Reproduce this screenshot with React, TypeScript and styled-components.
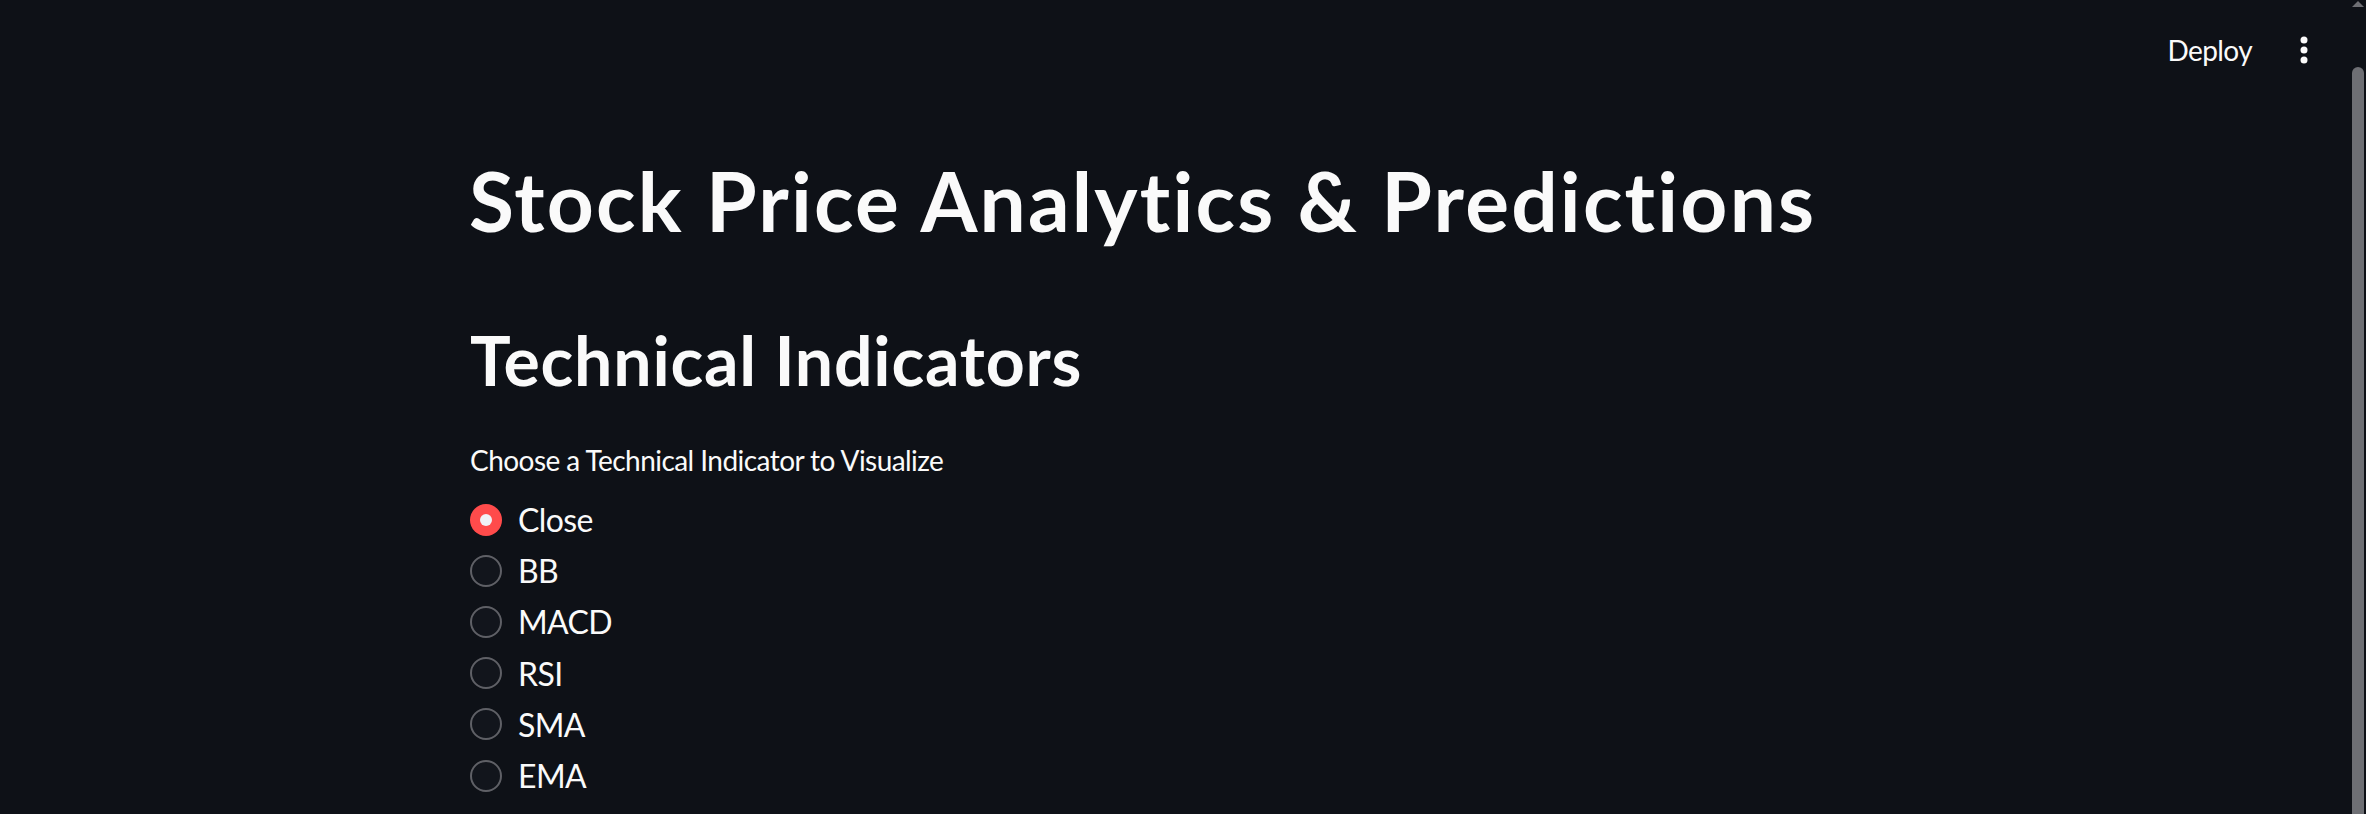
import React from 'react';
import { styled, createGlobalStyle } from 'styled-components';

const GlobalStyle = createGlobalStyle`
  html, body {
    margin: 0;
    padding: 0;
    background: #0e1117;
    overflow: hidden;
  }
  body {
    font-family: Lato, 'Noto Sans', sans-serif;
    font-variant-ligatures: none;
    color: #fafafa;
  }
`;

const Page = styled.div`
  min-height: 814px;
  background: #0e1117;
`;

const Header = styled.header`
  display: flex;
  justify-content: flex-end;
  align-items: flex-start;
  gap: 32px;
  height: 100px;
  padding: 30px 42px 0 0;
  box-sizing: border-box;
`;

const DeployButton = styled.button`
  all: unset;
  font-family: Lato, sans-serif;
  font-size: 28px;
  line-height: 40px;
  letter-spacing: -0.6px;
  color: #fafafa;
  cursor: pointer;
`;

const MenuButton = styled.button`
  all: unset;
  display: flex;
  align-items: center;
  justify-content: center;
  width: 40px;
  height: 40px;
  cursor: pointer;
`;

const Main = styled.main`
  width: 1426px;
  margin: 0 auto;
  padding-top: 50px;
`;

const Title = styled.h1`
  margin: 0 0 0 -1px;
  font-size: 82px;
  line-height: 100px;
  font-weight: 700;
  letter-spacing: 2.2px;
`;

const SubTitle = styled.h2`
  margin: 70px 0 0;
  font-size: 68px;
  line-height: 80px;
  font-weight: 700;
  letter-spacing: 0.8px;
`;

const Label = styled.p`
  margin: 40px 0 0;
  font-size: 28px;
  line-height: 40px;
  letter-spacing: -0.55px;
`;

const RadioGroup = styled.div`
  display: flex;
  flex-direction: column;
  margin-top: 14px;
`;

const RadioRow = styled.label`
  display: flex;
  align-items: center;
  gap: 16px;
  height: 51.2px;
  font-size: 32px;
  letter-spacing: -0.6px;
  cursor: pointer;
`;

const RadioMark = styled.span<{ $checked: boolean }>`
  display: flex;
  align-items: center;
  justify-content: center;
  flex-shrink: 0;
  width: 32px;
  height: 32px;
  box-sizing: border-box;
  border-radius: 50%;
  border: ${(p) => (p.$checked ? 'none' : '2px solid #5f6066')};
  background: ${(p) => (p.$checked ? '#ff4b4b' : '#12151c')};

  &::after {
    content: '';
    display: ${(p) => (p.$checked ? 'block' : 'none')};
    width: 12px;
    height: 12px;
    border-radius: 50%;
    background: #f0f2f6;
  }
`;

const ScrollTrack = styled.div`
  position: fixed;
  top: 0;
  right: 2px;
  width: 12px;
  height: 814px;
`;

const ScrollArrow = styled.div`
  width: 0;
  height: 0;
  margin: 1px auto 0;
  border-left: 6px solid transparent;
  border-right: 6px solid transparent;
  border-bottom: 6px solid #6e6f74;
`;

const ScrollThumb = styled.div`
  position: absolute;
  top: 67px;
  left: 0;
  width: 12px;
  height: 900px;
  border-radius: 6px 6px 0 0;
  background: #6e6f74;
`;

const options = ['Close', 'BB', 'MACD', 'RSI', 'SMA', 'EMA'];

export default function App() {
  const [selected, setSelected] = React.useState('Close');

  return (
    <Page>
      <GlobalStyle />
      <Header>
        <DeployButton>Deploy</DeployButton>
        <MenuButton aria-label="Main menu">
          <svg width="10" height="30" viewBox="0 0 10 30">
            <circle cx="5" cy="5" r="3.5" fill="#fafafa" />
            <circle cx="5" cy="15" r="3.5" fill="#fafafa" />
            <circle cx="5" cy="25" r="3.5" fill="#fafafa" />
          </svg>
        </MenuButton>
      </Header>
      <Main>
        <Title>Stock Price Analytics &amp; Predictions</Title>
        <SubTitle>Technical Indicators</SubTitle>
        <Label>Choose a Technical Indicator to Visualize</Label>
        <RadioGroup>
          {options.map((o) => (
            <RadioRow key={o} onClick={() => setSelected(o)}>
              <RadioMark $checked={selected === o} />
              {o}
            </RadioRow>
          ))}
        </RadioGroup>
      </Main>
      <ScrollTrack>
        <ScrollArrow />
        <ScrollThumb />
      </ScrollTrack>
    </Page>
  );
}
